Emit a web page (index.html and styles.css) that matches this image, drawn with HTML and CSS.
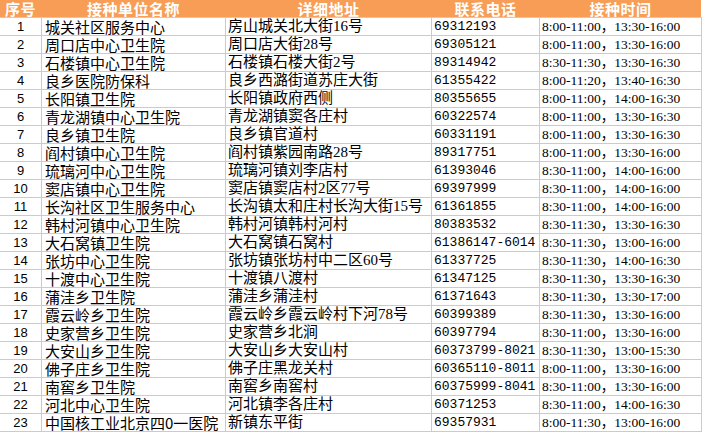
FILE: index.html
```html
<!DOCTYPE html>
<html lang="zh">
<head>
<meta charset="utf-8">
<title>接种单位</title>
<link rel="stylesheet" href="styles.css">
</head>
<body>
<div class="sheet">
  <div class="head">
    <div>序号</div><div>接种单位名称</div><div>详细地址</div><div>联系电话</div><div>接种时间</div>
  </div>
  <div class="rows">
    <div class="n">1</div><div class="nm">城关社区服务中心</div><div class="ad">房山城关北大街16号</div><div class="ph">69312193</div><div class="tm">8:00-11:00，13:30-16:00</div>
    <div class="n">2</div><div class="nm">周口店中心卫生院</div><div class="ad">周口店大街28号</div><div class="ph">69305121</div><div class="tm">8:00-11:00，13:30-16:00</div>
    <div class="n">3</div><div class="nm">石楼镇中心卫生院</div><div class="ad">石楼镇石楼大街2号</div><div class="ph">89314942</div><div class="tm">8:30-11:30，13:30-16:30</div>
    <div class="n">4</div><div class="nm">良乡医院防保科</div><div class="ad">良乡西潞街道苏庄大街</div><div class="ph">61355422</div><div class="tm">8:00-11:20，13:40-16:30</div>
    <div class="n">5</div><div class="nm">长阳镇卫生院</div><div class="ad">长阳镇政府西侧</div><div class="ph">80355655</div><div class="tm">8:00-11:00，14:00-16:30</div>
    <div class="n">6</div><div class="nm">青龙湖镇中心卫生院</div><div class="ad">青龙湖镇窦各庄村</div><div class="ph">60322574</div><div class="tm">8:00-11:00，13:30-16:30</div>
    <div class="n">7</div><div class="nm">良乡镇卫生院</div><div class="ad">良乡镇官道村</div><div class="ph">60331191</div><div class="tm">8:00-11:00，13:30-16:30</div>
    <div class="n">8</div><div class="nm">阎村镇中心卫生院</div><div class="ad">阎村镇紫园南路28号</div><div class="ph">89317751</div><div class="tm">8:00-11:00，13:30-16:00</div>
    <div class="n">9</div><div class="nm">琉璃河中心卫生院</div><div class="ad">琉璃河镇刘李店村</div><div class="ph">61393046</div><div class="tm">8:30-11:00，14:00-16:00</div>
    <div class="n">10</div><div class="nm">窦店镇中心卫生院</div><div class="ad">窦店镇窦店村2区77号</div><div class="ph">69397999</div><div class="tm">8:30-11:00，14:00-16:00</div>
    <div class="n">11</div><div class="nm">长沟社区卫生服务中心</div><div class="ad">长沟镇太和庄村长沟大街15号</div><div class="ph">61361855</div><div class="tm">8:30-11:00，14:00-16:00</div>
    <div class="n">12</div><div class="nm">韩村河镇中心卫生院</div><div class="ad">韩村河镇韩村河村</div><div class="ph">80383532</div><div class="tm">8:30-11:30，13:30-16:30</div>
    <div class="n">13</div><div class="nm">大石窝镇卫生院</div><div class="ad">大石窝镇石窝村</div><div class="ph">61386147-6014</div><div class="tm">8:30-11:30，13:00-16:00</div>
    <div class="n">14</div><div class="nm">张坊中心卫生院</div><div class="ad">张坊镇张坊村中二区60号</div><div class="ph">61337725</div><div class="tm">8:30-11:30，14:00-16:30</div>
    <div class="n">15</div><div class="nm">十渡中心卫生院</div><div class="ad">十渡镇八渡村</div><div class="ph">61347125</div><div class="tm">8:30-11:30，13:30-16:30</div>
    <div class="n">16</div><div class="nm">蒲洼乡卫生院</div><div class="ad">蒲洼乡蒲洼村</div><div class="ph">61371643</div><div class="tm">8:30-11:30，13:30-17:00</div>
    <div class="n">17</div><div class="nm">霞云岭乡卫生院</div><div class="ad">霞云岭乡霞云岭村下河78号</div><div class="ph">60399389</div><div class="tm">8:30-11:30，13:30-16:00</div>
    <div class="n">18</div><div class="nm">史家营乡卫生院</div><div class="ad">史家营乡北涧</div><div class="ph">60397794</div><div class="tm">8:30-11:00，13:30-16:00</div>
    <div class="n">19</div><div class="nm">大安山乡卫生院</div><div class="ad">大安山乡大安山村</div><div class="ph">60373799-8021</div><div class="tm">8:30-11:30，13:00-15:30</div>
    <div class="n">20</div><div class="nm">佛子庄乡卫生院</div><div class="ad">佛子庄黑龙关村</div><div class="ph">60365110-8011</div><div class="tm">8:00-11:00，13:30-16:00</div>
    <div class="n">21</div><div class="nm">南窖乡卫生院</div><div class="ad">南窖乡南窖村</div><div class="ph">60375999-8041</div><div class="tm">8:30-11:00，13:30-16:00</div>
    <div class="n">22</div><div class="nm">河北中心卫生院</div><div class="ad">河北镇李各庄村</div><div class="ph">60371253</div><div class="tm">8:30-11:00，14:00-16:30</div>
    <div class="n">23</div><div class="nm">中国核工业北京四0一医院</div><div class="ad">新镇东平街</div><div class="ph">69357931</div><div class="tm">8:00-11:30，13:00-16:00</div>
  </div>
</div>
</body>
</html>
```
FILE: styles.css
```css
html, body {
  margin: 0;
  padding: 0;
  background: #ffffff;
}

.sheet {
  width: 703px;
  font-family: "Noto Sans CJK SC", sans-serif;
  color: #000;
}

.head {
  display: grid;
  grid-template-columns: 41px 183px 205px 107px 161px;
  column-gap: 1px;
  width: 701px;
  height: 17px;
  background: #f79d56;
}

.head div {
  color: #ffffff;
  font-weight: bold;
  font-size: 15px;
  line-height: 17px;
  text-align: center;
  letter-spacing: 0.5px;
  white-space: nowrap;
}

.rows {
  display: grid;
  grid-template-columns: 41px 183px 205px 107px 161px;
  grid-auto-rows: 17px;
  gap: 1px;
  width: 701px;
  padding: 1px 1px 1px 0;
  background: #dccaa6;
}

.rows div {
  background: #ffffff;
  line-height: 17px;
  white-space: nowrap;
}

.n {
  text-align: center;
  font-family: "Liberation Sans", sans-serif;
  font-size: 13px;
}

.nm {
  padding-left: 3px;
  font-size: 15px;
  font-family: "Noto Sans CJK SC", sans-serif;
}

.ad {
  padding-left: 2px;
  font-size: 15px;
  font-family: "Liberation Serif", "Noto Sans CJK SC", serif;
}

.ph {
  padding-left: 2px;
  font-family: "Liberation Mono", monospace;
  font-size: 13px;
}

.tm {
  padding-left: 2px;
  font-family: "Liberation Serif", "Noto Sans CJK SC", serif;
  font-size: 13.5px;
}
```
